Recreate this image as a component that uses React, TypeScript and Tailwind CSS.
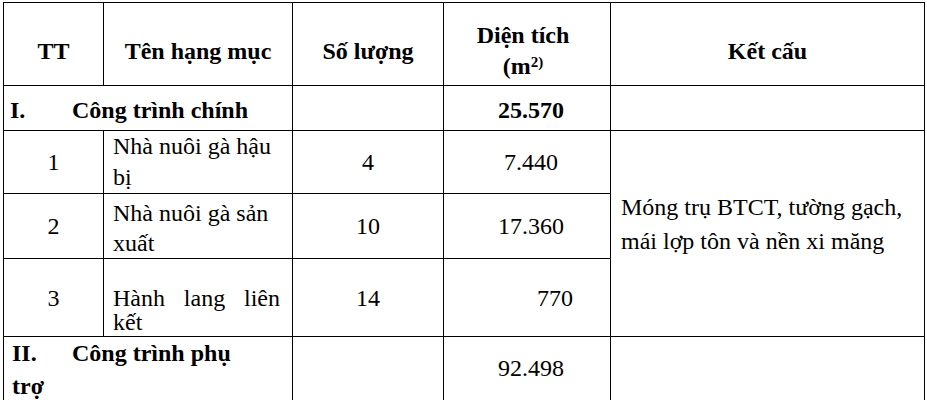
const cell = "border-[1.5px] border-black p-0 [font-family:'Liberation_Serif',serif] text-[24px]";

export default function App() {
    return (
        <div className="h-[400px] w-[927px] overflow-hidden bg-white pl-[3px] pt-[2px] [font-family:'Liberation_Serif',serif] text-[24px] text-black">
            <table className="w-[921px] table-fixed border-collapse">
                <colgroup>
                    <col className="w-[100px]" />
                    <col className="w-[189px]" />
                    <col className="w-[151px]" />
                    <col className="w-[167px]" />
                    <col className="w-[314px]" />
                </colgroup>
                <tbody>
                    {/* header */}
                    <tr className="h-[83px] font-bold">
                        <td className={`${cell} pt-[14px] text-center align-middle`}>TT</td>
                        <td className={`${cell} pt-[14px] text-center align-middle`}>Tên hạng mục</td>
                        <td className={`${cell} pt-[14px] text-center align-middle`}>Số lượng</td>
                        <td className={`${cell} pr-[8px] pt-[14px] text-center align-middle leading-[31px]`}>
                            Diện tích
                            <br />
                            (m<sup className="text-[15px]">2)</sup>
                        </td>
                        <td className={`${cell} pt-[14px] text-center align-middle`}>Kết cấu</td>
                    </tr>

                    {/* I. */}
                    <tr className="h-[45px] font-bold">
                        <td colSpan={2} className={`${cell} pb-[2px] pl-[6px] align-bottom`}>
                            <span className="inline-block w-[62px]">I.</span>Công trình chính
                        </td>
                        <td className={cell} />
                        <td className={`${cell} pb-[2px] pl-[8px] text-center align-bottom`}>25.570</td>
                        <td className={cell} />
                    </tr>

                    <tr className="h-[62px]">
                        <td className={`${cell} text-center align-middle`}>1</td>
                        <td className={`${cell} pl-[9px] pr-[12px] align-middle leading-[31px]`}>Nhà nuôi gà hậu bị</td>
                        <td className={`${cell} text-center align-middle`}>4</td>
                        <td className={`${cell} pl-[8px] text-center align-middle`}>7.440</td>
                        <td rowSpan={3} className={`${cell} pb-[20px] pl-[10px] pr-[6px] align-middle leading-[34px]`}>
                            Móng trụ BTCT, tường gạch, mái lợp tôn và nền xi măng
                        </td>
                    </tr>

                    <tr className="h-[64px]">
                        <td className={`${cell} text-center align-middle`}>2</td>
                        <td className={`${cell} pl-[9px] pr-[12px] pt-[4px] align-middle leading-[30px]`}>Nhà nuôi gà sản xuất</td>
                        <td className={`${cell} text-center align-middle`}>10</td>
                        <td className={`${cell} pl-[8px] text-center align-middle`}>17.360</td>
                    </tr>

                    <tr className="h-[78px]">
                        <td className={`${cell} text-center align-middle`}>3</td>
                        <td className={`${cell} pb-[2px] pl-[9px] pr-[12px] text-justify align-bottom leading-[24px]`}>Hành lang liên kết</td>
                        <td className={`${cell} text-center align-middle`}>14</td>
                        <td className={`${cell} pl-[56px] text-center align-middle`}>770</td>
                    </tr>

                    {/* II. */}
                    <tr className="h-[66px]">
                        <td colSpan={2} className={`${cell} pl-[8px] align-top font-bold leading-[33px]`}>
                            <span className="inline-block w-[60px]">II.</span>Công trình phụ
                            <br />
                            trợ
                        </td>
                        <td className={cell} />
                        <td className={`${cell} pb-[4px] pl-[8px] text-center align-middle`}>92.498</td>
                        <td className={cell} />
                    </tr>
                </tbody>
            </table>
        </div>
    );
}
